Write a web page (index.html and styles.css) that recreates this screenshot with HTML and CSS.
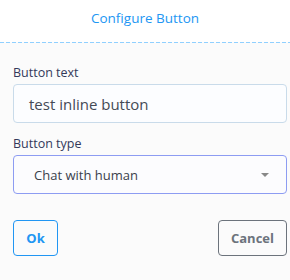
FILE: index.html
```html
<!DOCTYPE html>
<html>
<head>
<meta charset="utf-8">
<link rel="stylesheet" href="styles.css">
</head>
<body>
<div class="dialog">
  <div class="header">Configure Button</div>
  <div class="body">
    <label class="label">Button text</label>
    <div class="input">test inline button</div>
    <label class="label label-type">Button type</label>
    <div class="select">
      <span>Chat with human</span>
      <span class="caret"></span>
    </div>
    <div class="actions">
      <button class="btn btn-ok">Ok</button>
      <button class="btn btn-cancel">Cancel</button>
    </div>
  </div>
</div>
</body>
</html>
```
FILE: styles.css
```css
html, body {
  margin: 0;
  padding: 0;
  background: #ffffff;
}
body {
  font-family: "Open Sans", "Noto Sans", sans-serif;
  width: 290px;
  height: 280px;
  overflow: hidden;
}
.dialog {
  display: flex;
  flex-direction: column;
  height: 280px;
}
.header {
  height: 42px;
  padding-bottom: 6px;
  box-sizing: border-box;
  display: flex;
  align-items: center;
  justify-content: center;
  color: #2196f3;
  font-size: 13.5px;
}
.body {
  flex: 1;
  background-color: #fbfbfb;
  background-image: repeating-linear-gradient(to right, #90d0ff 0 4px, transparent 4px 6px);
  background-size: 100% 1px;
  background-repeat: no-repeat;
  padding: 23px 3px 0 13px;
  display: flex;
  flex-direction: column;
}
.label {
  font-size: 12.5px;
  color: #33395a;
  line-height: 16px;
  height: 16px;
}
.input {
  margin-top: 3px;
  height: 37px;
  border: 1px solid #c9dbea;
  border-radius: 4px;
  background: #fcfdff;
  display: flex;
  align-items: center;
  padding-left: 15px;
  font-size: 15px;
  color: #444a55;
}
.label-type {
  margin-top: 13px;
}
.select {
  margin-top: 3px;
  height: 37px;
  border: 1px solid #8d9cf2;
  border-radius: 4px;
  background: #fcfcfe;
  display: flex;
  align-items: center;
  justify-content: space-between;
  padding: 0 17px 0 20px;
  font-size: 13px;
  color: #3a3f4c;
}
.caret {
  width: 0;
  height: 0;
  border-left: 4px solid transparent;
  border-right: 4px solid transparent;
  border-top: 4px solid #888;
}
.actions {
  margin-top: 26px;
  display: flex;
  justify-content: space-between;
}
.btn {
  height: 36px;
  border-radius: 4px;
  background: transparent;
  font-family: inherit;
  font-weight: bold;
  font-size: 13px;
  padding: 0;
}
.btn-ok {
  width: 45px;
  border: 1px solid #2196f3;
  color: #2196f3;
}
.btn-cancel {
  width: 69px;
  border: 1px solid #6c737c;
  color: #6c737c;
}
```
